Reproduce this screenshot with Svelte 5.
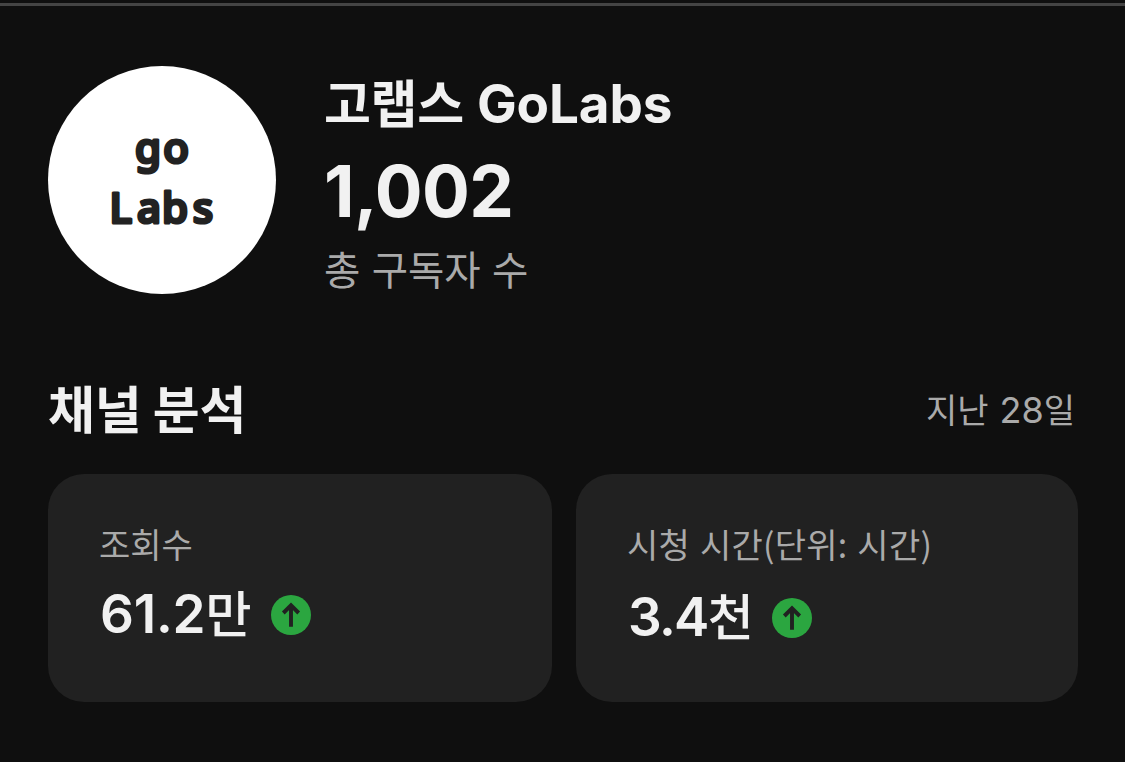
<script>
  const cards = [
    { label: '조회수', number: '61.2', unit: '만', id: 'views' },
    { label: '시청 시간(단위: 시간)', number: '3.4', unit: '천', id: 'watch' }
  ];
</script>

<main>
  <header>
    <svg class="avatar" width="228" height="228" viewBox="0 0 228 228">
      <circle cx="114" cy="114" r="114" fill="#fff" />
      <text x="87 115.2" y="97">go</text>
      <text x="61.4 89 114 144.7" y="156.5">Labs</text>
    </svg>
    <div class="info">
      <h1><span class="ko">고랩스</span><span class="latin">GoLabs</span></h1>
      <div class="count">1,002</div>
      <div class="caption">총 구독자 수</div>
    </div>
  </header>

  <div class="section">
    <h2>채널 분석</h2>
    <div class="period"><span>지난</span><span class="days">28</span><span>일</span></div>
  </div>

  <div class="cards">
    {#each cards as card}
      <section class="card {card.id}">
        <div class="label">{card.label}</div>
        <div class="value">
          <span class="number">{card.number}</span><span class="unit">{card.unit}</span>
          <svg width="40" height="40" viewBox="0 0 40 40" aria-hidden="true">
            <circle cx="20" cy="20" r="20" fill="#2ba640" />
            <path d="M20 31.8V10.5M12.3 18L20 10.3L27.7 18" fill="none" stroke="#212121" stroke-width="3.9" />
          </svg>
        </div>
      </section>
    {/each}
  </div>
</main>

<style>
  :global(body) { background: #0f0f0f; }
  :global(#app) { display: flow-root; }
  main {
    box-sizing: border-box;
    width: 1125px;
    height: 759px;
    margin-top: 3px;
    border-top: 3px solid #444;
    padding: 60px 50px 0 48px;
    overflow: hidden;
    background: #0f0f0f;
    color: #f1f1f1;
    font-family: Inter, "Noto Sans CJK KR", sans-serif;
  }
  header { display: flex; gap: 48px; height: 228px; }
  .avatar text {
    fill: #222;
    stroke: #222;
    stroke-width: 3.2px;
    stroke-linejoin: round;
    font: 500 42px "Noto Sans", sans-serif;
  }
  .info { white-space: nowrap; }
  h1, h2 { margin: 0; font-weight: 700; }
  h1 { display: flex; align-items: baseline; gap: 13px; height: 78px; line-height: 71px; }
  .ko { font-family: "Noto Sans CJK KR", sans-serif; font-size: 51px; letter-spacing: -0.3px; }
  .latin { font-size: 53px; font-weight: 650; letter-spacing: -0.1px; }
  .count { height: 92px; font-size: 71px; font-weight: 700; line-height: 94px; letter-spacing: -0.7px; }
  .caption { color: #aaa; font: 400 39.5px/64px "Noto Sans CJK KR", sans-serif; word-spacing: 2.5px; }
  .section { display: flex; justify-content: space-between; align-items: center; height: 84px; margin-top: 74px; }
  h2 { font: 700 51px/78px "Noto Sans CJK KR", sans-serif; height: 84px; letter-spacing: -0.2px; }
  .period { display: flex; align-items: baseline; height: 84px; color: #aaa; font: 400 34px/82px "Noto Sans CJK KR", sans-serif; }
  .days { margin-left: 11px; font-family: Inter, sans-serif; font-size: 36px; }
  .cards { display: grid; grid-template-columns: 504px 502px; gap: 24px; margin-top: 22px; margin-right: -3px; }
  .card { box-sizing: border-box; height: 228px; padding: 44px 51px; border-radius: 36px; background: #212121; white-space: nowrap; }
  .label { height: 54px; color: #aaa; font: 400 34px/52px "Noto Sans CJK KR", sans-serif; }
  .watch .label { word-spacing: 2px; letter-spacing: 0.25px; }
  .value { display: flex; align-items: baseline; height: 84px; line-height: 80px; }
  .watch .value { margin-top: 3px; }
  .number { margin-left: 1px; font-size: 53px; font-weight: 600; letter-spacing: -0.2px; }
  .watch .number { letter-spacing: -1.7px; }
  .unit { font: 500 50px/78px "Noto Sans CJK KR", sans-serif; }
  .value svg { align-self: center; margin: 2px 0 0 20px; }
  .watch svg { margin-left: 18px; }
</style>
